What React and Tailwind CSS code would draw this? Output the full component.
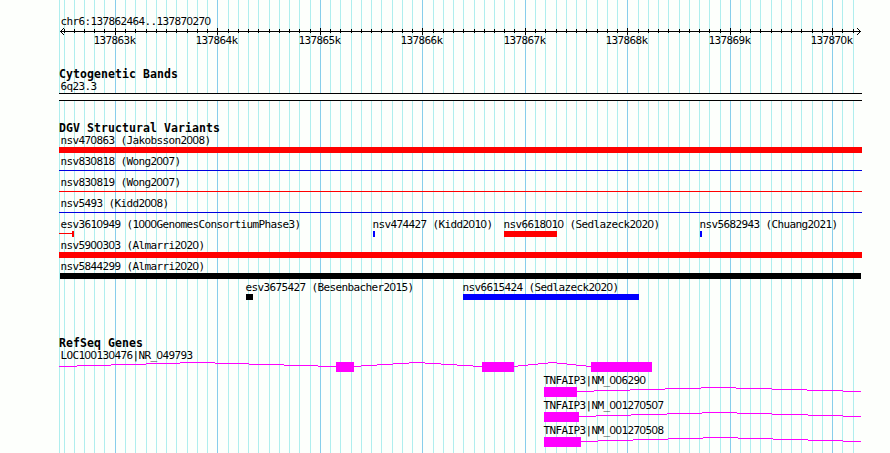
const MAJOR = [115, 217, 320, 422, 525, 627, 730, 832];
const MINOR = [
  64, 74, 84, 94, 104, 125, 135, 146, 156, 166, 176, 187, 197, 207, 228, 238, 248, 258, 269, 279, 289, 299, 310,
  330, 340, 351, 361, 371, 381, 392, 402, 412, 433, 443, 453, 463, 474, 484, 494, 504, 514, 535, 545, 556, 566,
  576, 586, 597, 607, 617, 638, 648, 658, 668, 679, 689, 699, 709, 720, 740, 750, 760, 771, 781, 791, 801, 812,
  822, 842, 853,
];

// The zero of the monospaced face is dotted; zeros are set in a plain face of the same advance.
function Mono({ children }) {
  return children.split(/(0+)/).map((part, i) =>
    part.startsWith("0") ? (
      <span key={i} className="font-['Liberation_Sans',sans-serif] text-[11.5px] leading-none tracking-[-0.396px]">
        {part}
      </span>
    ) : (
      part
    )
  );
}

function Label({ x = 61, children }) {
  return (
    <div className="col-start-1 row-start-1 h-[13px] whitespace-pre" style={{ paddingLeft: x - 0.5 }}>
      <Mono>{children}</Mono>
    </div>
  );
}

function Title({ children }) {
  return (
    <h2 className="h-3 whitespace-pre pl-[59px] text-[11.5px] font-bold leading-[13px] tracking-[0.077px]">{children}</h2>
  );
}

function Glyphs({ height, children }) {
  return (
    <svg width="890" height={height} shapeRendering="crispEdges" className="block">
      {children}
    </svg>
  );
}

function Grid() {
  return (
    <svg width="890" height="453" shapeRendering="crispEdges" className="absolute inset-0">
      {[59, ...MINOR].map((x) => (
        <rect key={x} x={x} y="0" width="1" height="453" fill="#afeeee" />
      ))}
      {MAJOR.map((x) => (
        <rect key={x} x={x} y="0" width="1" height="453" fill="#87ceeb" />
      ))}
    </svg>
  );
}

function Ruler() {
  return (
    <>
      <svg width="890" height="7" shapeRendering="crispEdges" className="block">
        <rect x="60" y="3" width="801" height="1" />
        {MINOR.map((x) => (
          <rect key={x} x={x} y="1" width="1" height="4" />
        ))}
        {MAJOR.map((x) => (
          <rect key={x} x={x} y="0" width="1" height="7" />
        ))}
        {[1, 2, 3].map((d) => (
          <g key={d}>
            <rect x={60 + d} y={3 - d} width="1" height="1" />
            <rect x={60 + d} y={3 + d} width="1" height="1" />
            <rect x={860 - d} y={3 - d} width="1" height="1" />
            <rect x={860 - d} y={3 + d} width="1" height="1" />
          </g>
        ))}
      </svg>
      <div className="-mt-px grid h-[14px]">
        {MAJOR.map((x, i) => (
          <Label key={x} x={x - 21}>{`${137863 + i}k`}</Label>
        ))}
      </div>
    </>
  );
}

const bar = (x, end, color) => ({ x, y: 0, w: end - x, h: 6, color });
const thin = (x, end, color) => ({ x, y: 2, w: end - x, h: 1, color });

const VARIANTS = [
  { labels: [[61, "nsv470863 (Jakobsson2008)"]], shapes: [bar(59, 862, "#ff0000")] },
  { labels: [[61, "nsv830818 (Wong2007)"]], shapes: [thin(59, 862, "#0000e0")] },
  { labels: [[61, "nsv830819 (Wong2007)"]], shapes: [thin(59, 862, "#ff0000")] },
  { labels: [[61, "nsv5493 (Kidd2008)"]], shapes: [thin(59, 862, "#0000e0")] },
  {
    labels: [
      [61, "esv3610949 (1000GenomesConsortiumPhase3)"],
      [373, "nsv474427 (Kidd2010)"],
      [504, "nsv6618010 (Sedlazeck2020)"],
      [700, "nsv5682943 (Chuang2021)"],
    ],
    shapes: [
      thin(59, 73, "#ff0000"),
      bar(72, 74, "#ff0000"),
      bar(373, 375, "#0000ff"),
      bar(504, 557, "#ff0000"),
      bar(700, 702, "#0000ff"),
    ],
  },
  { labels: [[61, "nsv5900303 (Almarri2020)"]], shapes: [bar(59, 862, "#ff0000")] },
  { labels: [[61, "nsv5844299 (Almarri2020)"]], shapes: [bar(60, 861, "#000000")] },
  {
    labels: [
      [246, "esv3675427 (Besenbacher2015)"],
      [463, "nsv6615424 (Sedlazeck2020)"],
    ],
    shapes: [bar(246, 253, "#000000"), bar(463, 639, "#0000ff")],
  },
];

// Each intron lists the x positions where the hat-shaped line steps up or down by one pixel.
const GENES = [
  {
    x: 61,
    name: "LOC100130476|NR_049793",
    exons: [[336, 354], [482, 514], [591, 652]],
    introns: [
      [59, 77, 111, 146, 180, 215, 249, 284, 318, 336],
      [354, 361, 377, 393, 409, 425, 441, 457, 473, 482],
      [514, 518, 528, 538, 548, 557, 567, 576, 586, 591],
    ],
  },
  {
    x: 544,
    name: "TNFAIP3|NM_006290",
    exons: [[544, 577]],
    introns: [[577, 594, 630, 665, 701, 736, 772, 807, 843, 861]],
  },
  {
    x: 544,
    name: "TNFAIP3|NM_001270507",
    exons: [[544, 579]],
    introns: [[579, 596, 631, 667, 702, 737, 772, 808, 843, 861]],
  },
  {
    x: 544,
    name: "TNFAIP3|NM_001270508",
    exons: [[544, 581]],
    introns: [[581, 598, 633, 668, 703, 738, 773, 808, 843, 861]],
  },
];

export default function App() {
  return (
    <main className="relative h-[453px] w-[890px] overflow-hidden bg-[#fdfffc] font-['DejaVu_Sans_Mono',monospace] text-[11px] leading-[13px] tracking-[-0.622px] text-black">
      <Grid />
      <div className="relative flex flex-col pt-[15px]">
        <header>
          <Label>chr6:137862464..137870270</Label>
          <Ruler />
        </header>

        <section className="mt-5">
          <Title>Cytogenetic Bands</Title>
          <Label>6q23.3</Label>
          <div className="ml-[59px] h-2 w-[803px] border-y border-black bg-[#fdfffc]" />
        </section>

        <section className="mt-[21px]">
          <Title>DGV Structural Variants</Title>
          {VARIANTS.map((row, i) => (
            <div key={i} className="h-[21px]">
              <div className="grid">
                {row.labels.map(([x, text]) => (
                  <Label key={text} x={x}>{text}</Label>
                ))}
              </div>
              <Glyphs height={8}>
                {row.shapes.map((s) => (
                  <rect key={s.x} x={s.x} y={s.y} width={s.w} height={s.h} fill={s.color} />
                ))}
              </Glyphs>
            </div>
          ))}
        </section>

        <section className="mt-[35px]">
          <Title>RefSeq Genes</Title>
          {GENES.map((gene) => (
            <div key={gene.name} className="h-[25px]">
              <Label x={gene.x}>{gene.name}</Label>
              <Glyphs height={12}>
                {gene.introns.map((steps) =>
                  steps.slice(0, -1).map((x, i) => (
                    <rect key={x} x={x} y={Math.abs(4 - i)} width={steps[i + 1] - x} height="1" fill="#ff00ff" />
                  ))
                )}
                {gene.exons.map(([x, end]) => (
                  <rect key={x} x={x} y="0" width={end - x} height="10" fill="#ff00ff" />
                ))}
              </Glyphs>
            </div>
          ))}
        </section>
      </div>
    </main>
  );
}
